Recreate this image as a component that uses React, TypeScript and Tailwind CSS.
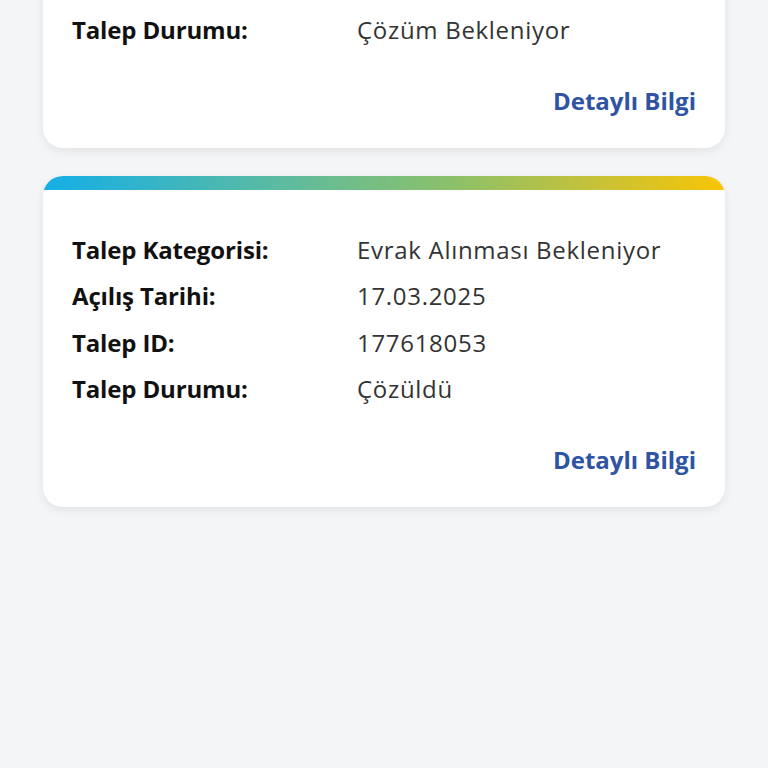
import React from "react";

type Row = { label: string; value: string };

function Card({ rows, strip = true }: { rows: Row[]; strip?: boolean }) {
  return (
    <div className="rounded-[20px] bg-white shadow-[0_3px_10px_rgba(0,0,0,0.08)] overflow-hidden">
      {strip && (
        <div className="h-[14px] bg-[linear-gradient(90deg,#14aee8_0%,#5dbba0_35%,#8cc06a_60%,#c9c236_82%,#f8c505_100%)]" />
      )}
      <div className="pt-[37px] pb-[32px] pl-[29px] pr-[29px]">
        {rows.map((r) => (
          <div key={r.label} className="flex h-[46.5px] items-center">
            <div className="w-[285px] font-bold text-[24px] text-[#111111] tracking-[-0.15px]">{r.label}</div>
            <div className="text-[24px] text-[#333333] tracking-[0.7px]">{r.value}</div>
          </div>
        ))}
        <div className="mt-[32px] flex h-[30px] items-center justify-end">
          <span className="font-bold text-[24px] text-[#2e54a3]">Detaylı Bilgi</span>
        </div>
      </div>
    </div>
  );
}

export default function App() {
  return (
    <div
      className="h-[768px] bg-[#f4f5f7] px-[43px] overflow-hidden"
      style={{ fontFamily: "'Open Sans', 'Noto Sans', sans-serif" }}
    >
      <div className="-mt-[30px] flex flex-col gap-[28px]">
        <Card strip={false} rows={[{ label: "Talep Durumu:", value: "Çözüm Bekleniyor" }]} />
        <Card
          rows={[
            { label: "Talep Kategorisi:", value: "Evrak Alınması Bekleniyor" },
            { label: "Açılış Tarihi:", value: "17.03.2025" },
            { label: "Talep ID:", value: "177618053" },
            { label: "Talep Durumu:", value: "Çözüldü" },
          ]}
        />
      </div>
    </div>
  );
}
